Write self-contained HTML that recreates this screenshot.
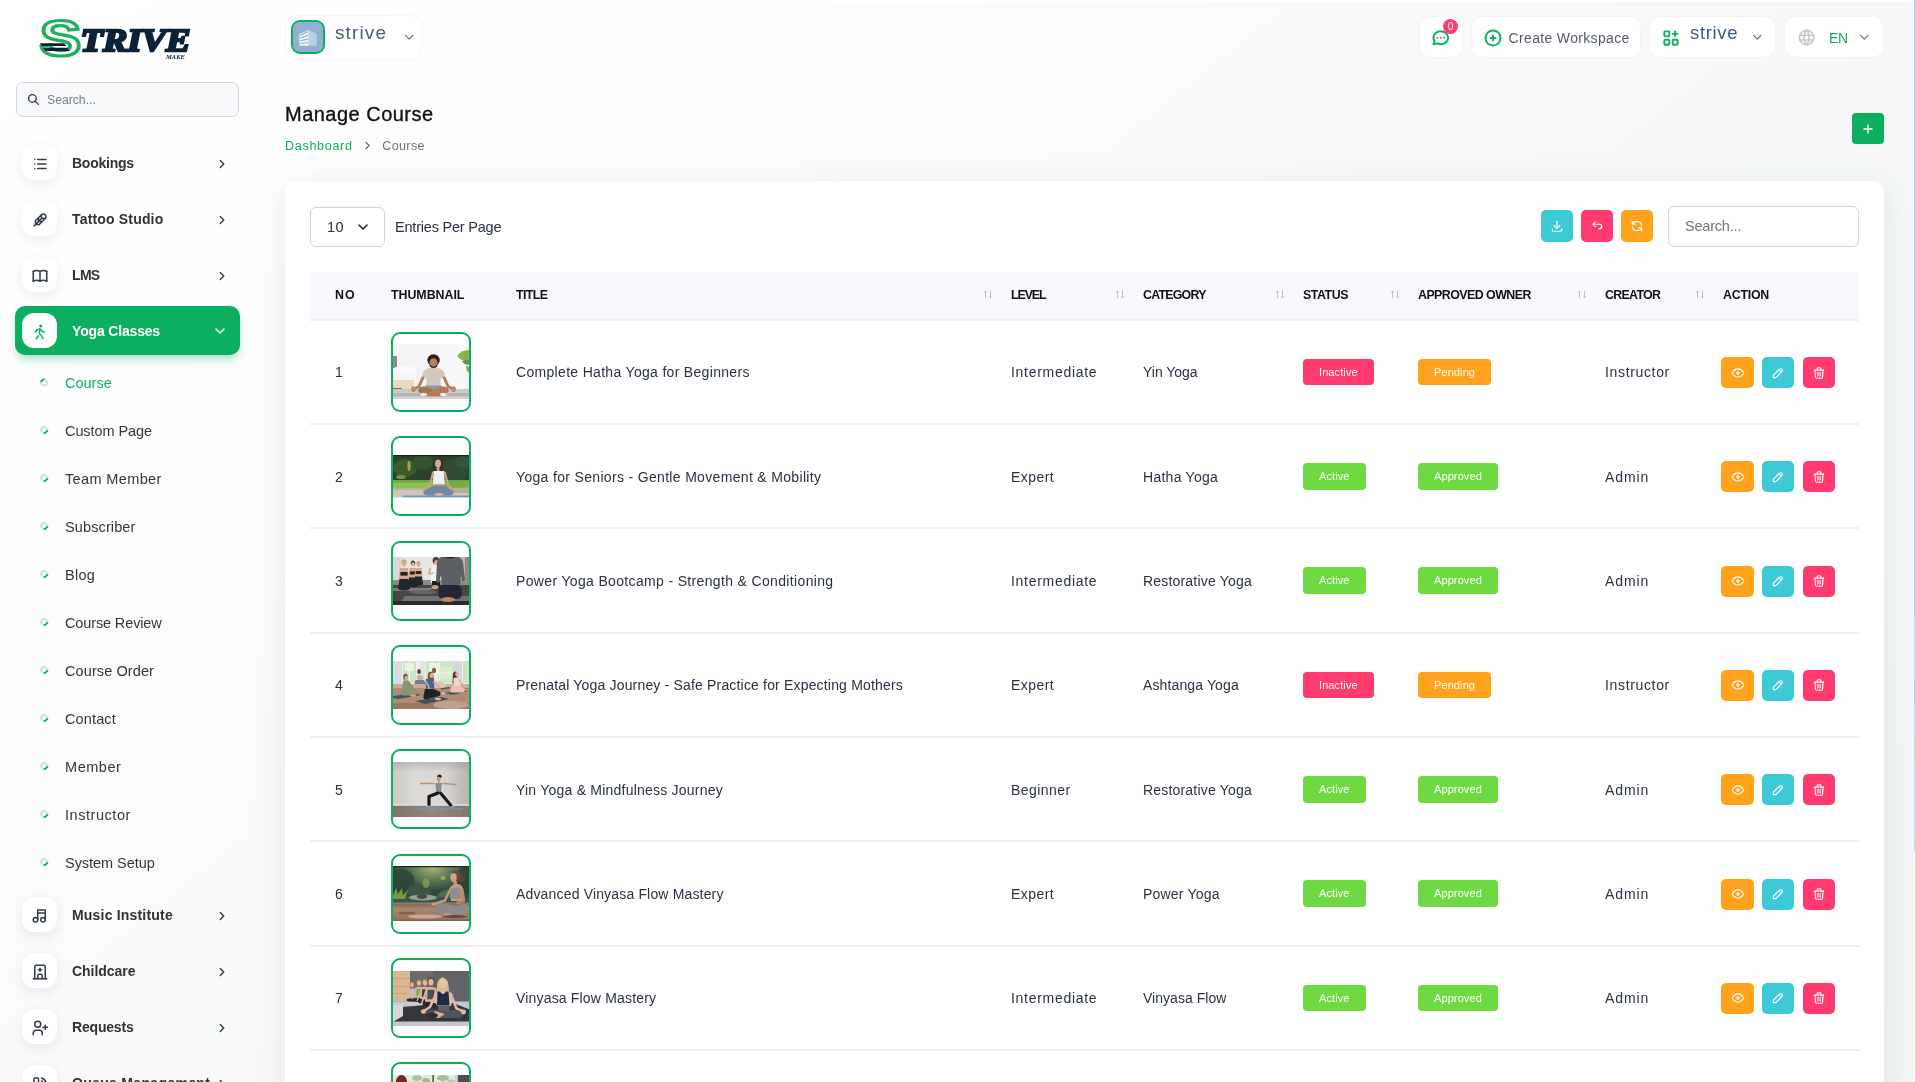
<!DOCTYPE html><html lang="en"><head><meta charset="utf-8"><title>Manage Course</title><style>*{box-sizing:border-box;margin:0;padding:0}
html,body{width:1915px;height:1082px;overflow:hidden}
body{font-family:"Liberation Sans",sans-serif;font-size:14px;color:#293240;background:#fff linear-gradient(141.55deg,rgba(240,244,243,0) 3.46%,#f0f4f3 99.86%);position:relative}
svg.ti{display:block;flex:none}
ul{list-style:none}
.bg-info{background:#3ec9d6}.bg-danger{background:#ff3a6e}.bg-warning{background:#ffa21d}.bg-success{background:#6fd943}
/* sidebar */
.sidebar{position:absolute;left:0;top:0;width:280px;height:1082px}
.logo{position:absolute;left:40px;top:18px;width:160px;height:50px}
.sb-search{position:absolute;left:16px;top:82px;width:223px;height:35px;border:1px solid #cfd5dd;border-radius:7px;background:#f8f9fa;display:flex;align-items:center;padding-left:10px;color:#7b838c;font-size:12.2px}
.sb-search .sbs{margin-left:7px;letter-spacing:0}
.nav-item{position:absolute;left:15px;width:225px;height:48.5px;border-radius:10px;display:flex;align-items:center}
.nav-ic svg{margin-top:3px}
.nav-ic{position:absolute;left:7px;top:6.5px;width:35px;height:35px;border-radius:12px;background:#fff;box-shadow:0 4px 12px rgba(40,60,80,.09);display:flex;align-items:center;justify-content:center;color:#333b47}
.nav-tx{position:absolute;left:57px;top:0;line-height:51px;font-size:14px;font-weight:700;color:#303236;letter-spacing:.1px;white-space:nowrap}
.nav-ar{position:absolute;left:200px;top:19px;color:#2f3640}
.nav-item.active{background:#0CAF60;box-shadow:0 6px 10px -2px rgba(12,175,96,.35)}
.nav-item.active .nav-ic{color:#0CAF60;box-shadow:none}
.nav-item.active .nav-tx,.nav-item.active .nav-ar{color:#fff}
.nav-item.active .nav-ar{left:197px;top:16.6px}
.sub-item{position:absolute;left:15px;width:225px;height:47px}
.sub-item .dot{position:absolute;left:24.8px;top:19px;width:8.4px;height:8.4px;border-radius:50%;border:2px solid #d5dae5;border-right-color:#0CAF60;transform:rotate(50deg)}
.sub-item.active .dot{transform:rotate(-130deg);top:18.6px}
.sub-tx{position:absolute;left:50px;top:0;line-height:48.4px;font-size:14.5px;color:#33373d;letter-spacing:0;white-space:nowrap}
.sub-item.active .sub-tx{color:#0CAF60}
/* header */
.hbox{position:absolute;background:#fff;border-radius:10px;display:flex;align-items:center;box-shadow:0 0 0 1px rgba(236,239,242,.45)}
.ws-left{left:286px;top:15.5px;width:134.6px;height:43.5px}
.avatar{position:absolute;left:5.1px;top:4.5px;width:33.7px;height:33.7px;border:2px solid #0CAF60;border-radius:9px;overflow:hidden;background:#8fb2d3}
.avatar svg{display:block}
.ws-left .ws-name{position:absolute;left:49px;top:4px;font-size:19px;color:#4a5f80;letter-spacing:1px;line-height:26px}
.ws-left .chev{position:absolute;left:115.5px;top:14.5px}
.msg{left:1420px;top:17px;width:42px;height:40px}
.msg>svg{position:absolute;left:11.3px;top:11px}
.msg .cnt{position:absolute;left:23px;top:2.4px;width:15px;height:15px;border-radius:50%;background:#ff3a6e;color:#fff;font-size:10px;line-height:15px;text-align:center}
.cw{left:1472px;top:17px;width:168px;height:40px;color:#525b69;font-size:14px}
.cw>svg{position:absolute;left:11.1px;top:11px}
.cw .cwt{position:absolute;left:36.6px;top:0;line-height:42.5px;letter-spacing:.28px;white-space:nowrap}
.ws{left:1650px;top:17px;width:125px;height:40px}
.ws>svg.ti{position:absolute;left:11.2px;top:11px}
.ws .ws-name{position:absolute;left:40px;top:3.2px;font-size:18.5px;color:#3f5a86;letter-spacing:.55px;line-height:26px}
.ws .chev{position:absolute;left:99.95px;top:13.15px}
.lang{left:1785px;top:17px;width:98px;height:40px}
.lang>svg.ti{position:absolute;left:11.5px;top:11.2px}
.lang .en{position:absolute;left:44px;top:0;line-height:43px;font-size:14px;color:#0CAF60;letter-spacing:-.9px}
.lang .chev{position:absolute;left:72.45px;top:12.95px}
.ptitle{position:absolute;left:285px;top:99px;font-size:20px;line-height:30px;font-weight:400;color:#111;letter-spacing:.05px;-webkit-text-stroke:.35px #111;white-space:nowrap}
.crumb{position:absolute;left:285px;top:135.5px;height:20px;display:flex;align-items:center;font-size:12.6px;white-space:nowrap}
.crumb .g{color:#0CAF60;letter-spacing:.2px}
.crumb .sep{margin:0 8px 0 8.5px}
.crumb .c{color:#6c757d;letter-spacing:.2px}
.addbtn{position:absolute;left:1852px;top:113px;width:32px;height:31px;border-radius:4px;background:#0CAF60;display:flex;align-items:center;justify-content:center}
/* card */
.card{position:absolute;left:285px;top:181px;width:1599px;height:920px;background:#fff;border-radius:10px;box-shadow:0 6px 30px rgba(182,186,203,.3)}
.sel{position:absolute;left:25px;top:26px;width:75px;height:40px;border:1px solid #ced4da;border-radius:6px;display:flex;align-items:center;padding-left:16px;font-size:14.5px;color:#293240}
.sel svg{position:absolute;left:44px;top:11px}
.epp{position:absolute;left:110px;top:26px;line-height:40px;font-size:14.5px;color:#293240;letter-spacing:.25px;white-space:nowrap}
.tbtn{position:absolute;top:29px;width:32px;height:32px;border-radius:5px;display:flex;align-items:center;justify-content:center}
.tsearch{position:absolute;left:1383px;top:25px;width:191px;height:41px;border:1px solid #ced4da;border-radius:6px;line-height:39px;padding-left:16px;font-size:14.5px;color:#6c757d;letter-spacing:.3px}
.tb{position:absolute;left:25px;top:91px;width:1549px}
.thead{position:absolute;left:0;top:0;width:1549px;height:49px;background:#f8f9fd;border-bottom:2px solid #eff0f2}
.th{position:absolute;top:0;height:47px;line-height:46px;font-size:12.4px;font-weight:700;color:#111;padding-left:25px;white-space:nowrap;letter-spacing:-.22px}
.sorter{position:absolute;right:-6.5px;top:17.6px;width:10px;height:9px}
.sorter svg{display:block}
.tr{position:absolute;left:0;width:1549px;height:104.33px}
.tr .ln{position:absolute;left:0;top:103.1px;width:1549px;height:1.8px;background:#f0f0f0}
.td{position:absolute;top:0;height:104px;display:flex;align-items:center;padding-left:25px;white-space:nowrap;font-size:14px;color:#293240;letter-spacing:.28px}
.c-no{left:0;width:56px}.c-th{left:56px;width:125px}.c-ti{left:181px;width:495px}.c-le{left:676px;width:132px}.c-ca{left:808px;width:160px}
.c-st{left:968px;width:115px}.c-ap{left:1083px;width:187px}.c-cr{left:1270px;width:118px}.c-ac{left:1388px;width:161px}
.thumb{display:block;width:80px;height:80px;border:2px solid #0CAF60;border-radius:9px;overflow:hidden;background:#fff}
.thumb svg{display:block}
.badge{display:inline-block;height:26.4px;line-height:26.4px;padding:0 16px;border-radius:4px;color:#fff;font-size:11px;letter-spacing:.1px}
.abtn{width:32px;height:31px;border-radius:5px;display:inline-flex;align-items:center;justify-content:center;margin-right:9px}
.abtn:first-child{width:33px;margin-right:8px}
.td.c-ac{padding-left:23px;padding-top:1px}
.td.c-no,.td.c-ti,.td.c-le,.td.c-ca,.td.c-cr{padding-top:.9px}
.scrolltrack{position:absolute;left:1914px;top:0;width:1px;height:1082px;background:#fff}
.scrollthumb{position:absolute;left:1913.6px;top:0;width:1.4px;height:851px;background:#c9cef0}

.topstrip{position:absolute;left:0;top:0;width:1915px;height:2px;background:#fff}

.wrap{position:absolute;left:0;top:0;width:1915px;height:1082px;overflow:hidden;will-change:transform}
</style></head><body><div class="wrap">
<nav class="sidebar">
<div class="logo"><svg width="160" height="50" viewBox="0 0 160 50" overflow="visible"><text x="-0.3" y="37.6" font-family="Liberation Sans, sans-serif" font-weight="700" font-size="50.5" fill="#fff" stroke="#1eb05f" stroke-width="3.2" textLength="41.5" lengthAdjust="spacingAndGlyphs">S</text><path d="M-0.4 25.3h24.5l2.6 2.7h-25z" fill="#0b2236"/><path d="M3 29.7h24.2l2.6 3.2h-24.2z" fill="#0b2236"/><text x="40.5" y="33.4" font-family="Liberation Serif, serif" font-weight="700" font-style="italic" font-size="32.5" fill="#0b2236" stroke="#0b2236" stroke-width="2.3" stroke-linejoin="miter" textLength="110" lengthAdjust="spacingAndGlyphs">TRIVE</text><text x="126" y="40.8" font-family="Liberation Serif, serif" font-weight="700" font-style="italic" font-size="6" fill="#0b2236" textLength="19" lengthAdjust="spacingAndGlyphs">MAKE</text></svg></div>
<div class="sb-search"><svg class="ti" width="13" height="13" viewBox="0 0 24 24" fill="none" stroke="#3b3f45" stroke-width="2.6" stroke-linecap="round" stroke-linejoin="round" ><path d="M10 10m-7 0a7 7 0 1 0 14 0a7 7 0 1 0 -14 0"/><path d="M21 21l-6 -6"/></svg><span class="sbs"><span style="letter-spacing:0.002px;margin-left:0.00px">Search...</span></span></div>
<ul class="nav">
<li class="nav-item" style="top:138px"><span class="nav-ic"><svg class="ti" width="18" height="18" viewBox="0 0 24 24" fill="none" stroke="currentColor" stroke-width="2" stroke-linecap="round" stroke-linejoin="round" ><path d="M9 6l11 0"/><path d="M9 12l11 0"/><path d="M9 18l11 0"/><path d="M5 6l0 .01"/><path d="M5 12l0 .01"/><path d="M5 18l0 .01"/></svg></span><span class="nav-tx"><span style="letter-spacing:-0.240px;margin-left:0.00px">Bookings</span></span><span class="nav-ar"><svg class="ti" width="14" height="14" viewBox="0 0 24 24" fill="none" stroke="currentColor" stroke-width="2.4" stroke-linecap="round" stroke-linejoin="round" ><path d="M9 6l6 6l-6 6"/></svg></span></li>
<li class="nav-item" style="top:194px"><span class="nav-ic"><svg class="ti" width="18" height="18" viewBox="0 0 24 24" fill="none" stroke="currentColor" stroke-width="2" stroke-linecap="round" stroke-linejoin="round" ><path d="M4 20l10 -10m0 -5v5h5m-9 -1v5h5m-9 -1v5h5m-5 -5l4 -4l4 -4"/><path d="M19 10c.638 -.636 1 -1.515 1 -2.486a3.515 3.515 0 0 0 -3.517 -3.514c-.97 0 -1.847 .367 -2.483 1m-3 13l4 -4l4 -4"/></svg></span><span class="nav-tx"><span style="letter-spacing:0.172px;margin-left:0.00px">Tattoo Studio</span></span><span class="nav-ar"><svg class="ti" width="14" height="14" viewBox="0 0 24 24" fill="none" stroke="currentColor" stroke-width="2.4" stroke-linecap="round" stroke-linejoin="round" ><path d="M9 6l6 6l-6 6"/></svg></span></li>
<li class="nav-item" style="top:250px"><span class="nav-ic"><svg class="ti" width="18" height="18" viewBox="0 0 24 24" fill="none" stroke="currentColor" stroke-width="2" stroke-linecap="round" stroke-linejoin="round" ><path d="M3 19a9 9 0 0 1 9 0a9 9 0 0 1 9 0"/><path d="M3 6a9 9 0 0 1 9 0a9 9 0 0 1 9 0"/><path d="M3 6l0 13"/><path d="M12 6l0 13"/><path d="M21 6l0 13"/></svg></span><span class="nav-tx"><span style="letter-spacing:-0.673px;margin-left:0.00px">LMS</span></span><span class="nav-ar"><svg class="ti" width="14" height="14" viewBox="0 0 24 24" fill="none" stroke="currentColor" stroke-width="2.4" stroke-linecap="round" stroke-linejoin="round" ><path d="M9 6l6 6l-6 6"/></svg></span></li>
<li class="nav-item active" style="top:306px"><span class="nav-ic"><svg class="ti" width="18" height="18" viewBox="0 0 24 24" fill="none" stroke="currentColor" stroke-width="2" stroke-linecap="round" stroke-linejoin="round" ><path d="M13 4m-1 0a1 1 0 1 0 2 0a1 1 0 1 0 -2 0"/><path d="M7 21l3 -4"/><path d="M16 21l-2 -4l-3 -3l1 -6"/><path d="M6 12l2 -3l4 -1l3 3l3 1"/></svg></span><span class="nav-tx"><span style="letter-spacing:-0.168px;margin-left:0.00px">Yoga Classes</span></span><span class="nav-ar"><svg class="ti" width="16" height="16" viewBox="0 0 24 24" fill="none" stroke="currentColor" stroke-width="2.2" stroke-linecap="round" stroke-linejoin="round" ><path d="M6 9l6 6l6 -6"/></svg></span></li>
<li class="sub-item active" style="top:359px"><span class="dot"></span><span class="sub-tx"><span style="letter-spacing:0.000px;margin-left:0.00px">Course</span></span></li>
<li class="sub-item" style="top:407px"><span class="dot"></span><span class="sub-tx"><span style="letter-spacing:-0.084px;margin-left:0.00px">Custom Page</span></span></li>
<li class="sub-item" style="top:455px"><span class="dot"></span><span class="sub-tx"><span style="letter-spacing:0.370px;margin-left:0.00px">Team Member</span></span></li>
<li class="sub-item" style="top:503px"><span class="dot"></span><span class="sub-tx"><span style="letter-spacing:0.118px;margin-left:0.00px">Subscriber</span></span></li>
<li class="sub-item" style="top:551px"><span class="dot"></span><span class="sub-tx"><span style="letter-spacing:0.249px;margin-left:0.00px">Blog</span></span></li>
<li class="sub-item" style="top:599px"><span class="dot"></span><span class="sub-tx"><span style="letter-spacing:-0.131px;margin-left:0.00px">Course Review</span></span></li>
<li class="sub-item" style="top:647px"><span class="dot"></span><span class="sub-tx"><span style="letter-spacing:0.095px;margin-left:0.00px">Course Order</span></span></li>
<li class="sub-item" style="top:695px"><span class="dot"></span><span class="sub-tx"><span style="letter-spacing:0.125px;margin-left:0.00px">Contact</span></span></li>
<li class="sub-item" style="top:743px"><span class="dot"></span><span class="sub-tx"><span style="letter-spacing:0.551px;margin-left:0.00px">Member</span></span></li>
<li class="sub-item" style="top:791px"><span class="dot"></span><span class="sub-tx"><span style="letter-spacing:0.551px;margin-left:0.00px">Instructor</span></span></li>
<li class="sub-item" style="top:839px"><span class="dot"></span><span class="sub-tx"><span style="letter-spacing:-0.042px;margin-left:0.00px">System Setup</span></span></li>
<li class="nav-item" style="top:890px"><span class="nav-ic"><svg class="ti" width="18" height="18" viewBox="0 0 24 24" fill="none" stroke="currentColor" stroke-width="2" stroke-linecap="round" stroke-linejoin="round" ><path d="M6 17m-3 0a3 3 0 1 0 6 0a3 3 0 1 0 -6 0"/><path d="M16 17m-3 0a3 3 0 1 0 6 0a3 3 0 1 0 -6 0"/><path d="M9 17l0 -13l10 0l0 13"/><path d="M9 8l10 0"/></svg></span><span class="nav-tx"><span style="letter-spacing:0.191px;margin-left:0.00px">Music Institute</span></span><span class="nav-ar"><svg class="ti" width="14" height="14" viewBox="0 0 24 24" fill="none" stroke="currentColor" stroke-width="2.4" stroke-linecap="round" stroke-linejoin="round" ><path d="M9 6l6 6l-6 6"/></svg></span></li>
<li class="nav-item" style="top:946px"><span class="nav-ic"><svg class="ti" width="18" height="18" viewBox="0 0 24 24" fill="none" stroke="currentColor" stroke-width="2" stroke-linecap="round" stroke-linejoin="round" ><path d="M3 21l18 0"/><path d="M5 21v-16a2 2 0 0 1 2 -2h10a2 2 0 0 1 2 2v16"/><path d="M9 21v-4a2 2 0 0 1 2 -2h2a2 2 0 0 1 2 2v4"/><path d="M10 9l4 0"/><path d="M12 7l0 4"/></svg></span><span class="nav-tx"><span style="letter-spacing:-0.037px;margin-left:0.00px">Childcare</span></span><span class="nav-ar"><svg class="ti" width="14" height="14" viewBox="0 0 24 24" fill="none" stroke="currentColor" stroke-width="2.4" stroke-linecap="round" stroke-linejoin="round" ><path d="M9 6l6 6l-6 6"/></svg></span></li>
<li class="nav-item" style="top:1002px"><span class="nav-ic"><svg class="ti" width="18" height="18" viewBox="0 0 24 24" fill="none" stroke="currentColor" stroke-width="2" stroke-linecap="round" stroke-linejoin="round" ><path d="M9 7m-4 0a4 4 0 1 0 8 0a4 4 0 1 0 -8 0"/><path d="M3 21v-2a4 4 0 0 1 4 -4h4a4 4 0 0 1 4 4v2"/><path d="M16 11h6m-3 -3v6"/></svg></span><span class="nav-tx"><span style="letter-spacing:-0.186px;margin-left:0.00px">Requests</span></span><span class="nav-ar"><svg class="ti" width="14" height="14" viewBox="0 0 24 24" fill="none" stroke="currentColor" stroke-width="2.4" stroke-linecap="round" stroke-linejoin="round" ><path d="M9 6l6 6l-6 6"/></svg></span></li>
<li class="nav-item" style="top:1058px"><span class="nav-ic"><svg class="ti" width="18" height="18" viewBox="0 0 24 24" fill="none" stroke="currentColor" stroke-width="2" stroke-linecap="round" stroke-linejoin="round" ><path d="M5 4h4a1 1 0 0 1 1 1v6a1 1 0 0 1 -1 1h-4a1 1 0 0 1 -1 -1v-6a1 1 0 0 1 1 -1"/><path d="M14 4a8 8 0 0 1 6 7"/><path d="M14 8a4 4 0 0 1 2.5 3"/><path d="M4 16h6v4h-6z"/><path d="M14 16h6"/></svg></span><span class="nav-tx"><span style="letter-spacing:0.319px;margin-left:0.00px">Queue Management</span></span><span class="nav-ar"><svg class="ti" width="14" height="14" viewBox="0 0 24 24" fill="none" stroke="currentColor" stroke-width="2.4" stroke-linecap="round" stroke-linejoin="round" ><path d="M9 6l6 6l-6 6"/></svg></span></li>
</ul></nav>
<header class="topbar">
<div class="hbox ws-left"><span class="avatar"><svg width="29.7" height="29.7" viewBox="0 0 30 30"><rect width="30" height="30" fill="#8fb1cf"/><path d="M6.5 24V12.5l9.5-4.7V24z" fill="#eef4fa"/><path d="M16 7.8l8 4.2V24h-8z" fill="#b9cfe4"/><path d="M7.5 13.4l8-3.9M7.5 16.2l8-2.9M7.5 19l8-1.9M7.5 21.7l8-.9" stroke="#8fb2d3" stroke-width="1.1"/></svg></span><span class="ws-name"><span style="letter-spacing:1.118px;margin-left:0.00px">strive</span></span><span class="chev"><svg class="ti" width="14.5" height="14.5" viewBox="0 0 24 24" fill="none" stroke="#5f6980" stroke-width="1.9" stroke-linecap="round" stroke-linejoin="round" ><path d="M6 9l6 6l6 -6"/></svg></span></div>
<div class="hbox msg"><svg class="ti" width="19.5" height="19.5" viewBox="0 0 24 24" fill="none" stroke="#0CAF60" stroke-width="2.3" stroke-linecap="round" stroke-linejoin="round" ><path d="M3 20l1.3 -3.9a9 8 0 1 1 3.4 2.9l-4.7 1"/><path d="M12 12l0 .01"/><path d="M8 12l0 .01"/><path d="M16 12l0 .01"/></svg><span class="cnt">0</span></div>
<div class="hbox cw"><svg class="ti" width="20" height="20" viewBox="0 0 24 24" fill="none" stroke="#0CAF60" stroke-width="2.3" stroke-linecap="round" stroke-linejoin="round" ><path d="M12 12m-9 0a9 9 0 1 0 18 0a9 9 0 1 0 -18 0"/><path d="M9 12l6 0"/><path d="M12 9l0 6"/></svg><span class="cwt"><span style="letter-spacing:0.337px;margin-left:0.00px">Create Workspace</span></span></div>
<div class="hbox ws"><svg class="ti" width="20" height="20" viewBox="0 0 24 24" fill="none" stroke="#0CAF60" stroke-width="2.3" stroke-linecap="round" stroke-linejoin="round" ><path d="M4 4m0 1a1 1 0 0 1 1 -1h4a1 1 0 0 1 1 1v4a1 1 0 0 1 -1 1h-4a1 1 0 0 1 -1 -1z"/><path d="M4 14m0 1a1 1 0 0 1 1 -1h4a1 1 0 0 1 1 1v4a1 1 0 0 1 -1 1h-4a1 1 0 0 1 -1 -1z"/><path d="M14 14m0 1a1 1 0 0 1 1 -1h4a1 1 0 0 1 1 1v4a1 1 0 0 1 -1 1h-4a1 1 0 0 1 -1 -1z"/><path d="M14 7l6 0"/><path d="M17 4l0 6"/></svg><span class="ws-name"><span style="letter-spacing:0.654px;margin-left:0.00px">strive</span></span><span class="chev"><svg class="ti" width="14.5" height="14.5" viewBox="0 0 24 24" fill="none" stroke="#5f6980" stroke-width="1.9" stroke-linecap="round" stroke-linejoin="round" ><path d="M6 9l6 6l6 -6"/></svg></span></div>
<div class="hbox lang"><svg class="ti" width="19.2" height="19.2" viewBox="0 0 24 24" fill="none" stroke="#c8c8c8" stroke-width="2" stroke-linecap="round" stroke-linejoin="round" ><path d="M12 12m-9 0a9 9 0 1 0 18 0a9 9 0 1 0 -18 0"/><path d="M3.6 9l16.8 0"/><path d="M3.6 15l16.8 0"/><path d="M11.5 3a17 17 0 0 0 0 18"/><path d="M12.5 3a17 17 0 0 1 0 18"/></svg><span class="en"><span style="letter-spacing:-0.377px;margin-left:0.00px">EN</span></span><span class="chev"><svg class="ti" width="14.5" height="14.5" viewBox="0 0 24 24" fill="none" stroke="#5f6980" stroke-width="1.9" stroke-linecap="round" stroke-linejoin="round" ><path d="M6 9l6 6l6 -6"/></svg></span></div>
</header>
<h4 class="ptitle"><span style="letter-spacing:0.482px;margin-left:0.00px">Manage Course</span></h4>
<div class="crumb"><span class="g"><span style="letter-spacing:0.673px;margin-left:0.00px">Dashboard</span></span><span class="sep"><svg class="ti" width="13" height="13" viewBox="0 0 24 24" fill="none" stroke="#5d6670" stroke-width="2" stroke-linecap="round" stroke-linejoin="round" ><path d="M9 6l6 6l-6 6"/></svg></span><span class="c"><span style="letter-spacing:0.360px;margin-left:0.00px">Course</span></span></div>
<div class="addbtn"><svg class="ti" width="14" height="14" viewBox="0 0 24 24" fill="none" stroke="#fff" stroke-width="2.3" stroke-linecap="round" stroke-linejoin="round" ><path d="M12 5l0 14"/><path d="M5 12l14 0"/></svg></div>
<section class="card">
<div class="sel"><span style="letter-spacing:0.366px;margin-left:0.00px">10</span><svg class="ti" width="16" height="16" viewBox="0 0 24 24" fill="none" stroke="#222" stroke-width="2.4" stroke-linecap="round" stroke-linejoin="round" ><path d="M6 9l6 6l6 -6"/></svg></div><div class="epp"><span style="letter-spacing:-0.208px;margin-left:0.00px">Entries Per Page</span></div>
<div class="tbtn bg-info" style="left:1256px"><svg class="ti" width="14" height="14" viewBox="0 0 24 24" fill="none" stroke="#fff" stroke-width="2" stroke-linecap="round" stroke-linejoin="round" ><path d="M4 17v2a2 2 0 0 0 2 2h12a2 2 0 0 0 2 -2v-2"/><path d="M7 11l5 5l5 -5"/><path d="M12 4l0 12"/></svg></div><div class="tbtn bg-danger" style="left:1296px"><svg class="ti" width="14" height="14" viewBox="0 0 24 24" fill="none" stroke="#fff" stroke-width="2" stroke-linecap="round" stroke-linejoin="round" ><path d="M9 13l-4 -4l4 -4m-4 4h11a4 4 0 0 1 0 8h-1"/></svg></div><div class="tbtn bg-warning" style="left:1336px"><svg class="ti" width="14" height="14" viewBox="0 0 24 24" fill="none" stroke="#fff" stroke-width="2" stroke-linecap="round" stroke-linejoin="round" ><path d="M20 11a8.1 8.1 0 0 0 -15.5 -2m-.5 -5v5h5"/><path d="M4 13a8.1 8.1 0 0 0 15.5 2m.5 5v-5h-5"/></svg></div>
<div class="tsearch"><span style="letter-spacing:-0.203px;margin-left:0.00px">Search...</span></div>
<div class="tb"><div class="thead">
<div class="th c-no"><span class="ht"><span style="letter-spacing:1.003px;margin-left:0.00px">NO</span></span></div>
<div class="th c-th"><span class="ht"><span style="letter-spacing:-0.035px;margin-left:0.00px">THUMBNAIL</span></span></div>
<div class="th c-ti"><span class="ht"><span style="letter-spacing:-0.605px;margin-left:0.00px">TITLE</span></span><span class="sorter"><svg width="10" height="9" viewBox="0 0 10 9" fill="none" stroke="#b7bbc2" stroke-width=".9"><path d="M2.5 8.3V1M1.1 2.5L2.5 1L3.9 2.5M7.5 .7V8M6.1 6.5L7.5 8L8.9 6.5"/></svg></span></div>
<div class="th c-le"><span class="ht"><span style="letter-spacing:-1.101px;margin-left:0.00px">LEVEL</span></span><span class="sorter"><svg width="10" height="9" viewBox="0 0 10 9" fill="none" stroke="#b7bbc2" stroke-width=".9"><path d="M2.5 8.3V1M1.1 2.5L2.5 1L3.9 2.5M7.5 .7V8M6.1 6.5L7.5 8L8.9 6.5"/></svg></span></div>
<div class="th c-ca"><span class="ht"><span style="letter-spacing:-0.771px;margin-left:0.00px">CATEGORY</span></span><span class="sorter"><svg width="10" height="9" viewBox="0 0 10 9" fill="none" stroke="#b7bbc2" stroke-width=".9"><path d="M2.5 8.3V1M1.1 2.5L2.5 1L3.9 2.5M7.5 .7V8M6.1 6.5L7.5 8L8.9 6.5"/></svg></span></div>
<div class="th c-st"><span class="ht"><span style="letter-spacing:-0.444px;margin-left:0.00px">STATUS</span></span><span class="sorter"><svg width="10" height="9" viewBox="0 0 10 9" fill="none" stroke="#b7bbc2" stroke-width=".9"><path d="M2.5 8.3V1M1.1 2.5L2.5 1L3.9 2.5M7.5 .7V8M6.1 6.5L7.5 8L8.9 6.5"/></svg></span></div>
<div class="th c-ap"><span class="ht"><span style="letter-spacing:-0.547px;margin-left:0.00px">APPROVED OWNER</span></span><span class="sorter"><svg width="10" height="9" viewBox="0 0 10 9" fill="none" stroke="#b7bbc2" stroke-width=".9"><path d="M2.5 8.3V1M1.1 2.5L2.5 1L3.9 2.5M7.5 .7V8M6.1 6.5L7.5 8L8.9 6.5"/></svg></span></div>
<div class="th c-cr"><span class="ht"><span style="letter-spacing:-0.686px;margin-left:0.00px">CREATOR</span></span><span class="sorter"><svg width="10" height="9" viewBox="0 0 10 9" fill="none" stroke="#b7bbc2" stroke-width=".9"><path d="M2.5 8.3V1M1.1 2.5L2.5 1L3.9 2.5M7.5 .7V8M6.1 6.5L7.5 8L8.9 6.5"/></svg></span></div>
<div class="th c-ac"><span class="ht"><span style="letter-spacing:-0.244px;margin-left:0.00px">ACTION</span></span></div>
</div>
<div class="tr" style="top:48.00px"><i class="ln"></i><div class="td c-no">1</div><div class="td c-th"><span class="thumb"><svg width="76" height="76" viewBox="0 0 76 76"><defs><clipPath id="c1"><rect x="0" y="10" width="76" height="55"/></clipPath><filter id="f1" x="-5%" y="-5%" width="110%" height="110%"><feGaussianBlur stdDeviation="0.55"/></filter></defs><g clip-path="url(#c1)"><g filter="url(#f1)"><rect x="-2" y="8" width="80" height="60" fill="#f3f4f5" /><rect x="46" y="10" width="32" height="46" fill="#f8f8f9" /><rect x="0" y="22" width="4" height="13" fill="#8a8990" /><rect x="0" y="38" width="23" height="9" fill="#f4f4f4" /><rect x="0" y="46" width="21" height="9" fill="#e9d9bf" /><rect x="0" y="54" width="9" height="3" fill="#8a6f5f" /><rect x="24" y="34" width="1.6" height="18" fill="#ededed" /><rect x="-2" y="55" width="80" height="11" fill="#c9c9c8" /><rect x="-2" y="59" width="80" height="4" fill="#b4b4b4" /><rect x="-2" y="62.5" width="80" height="3" fill="#d2d2d2" /><path d="M64 22 q4 -6 12 -6 v10 q-7 2 -12 -4z" fill="#86b544" /><path d="M69 27 q4 -2 7 -1 v5 q-5 0 -7 -4z" fill="#6d8f5a" /><path d="M73 32 q2 0 3 1 v6 q-3 -2 -3 -7z" fill="#7cab3f" /><rect x="0" y="34" width="23" height="9" fill="#f7f7f7" /><ellipse cx="11" cy="35" rx="11" ry="3" fill="#fbfbfb" /><g transform="translate(-3.2,-2.6) scale(1.08)"><ellipse cx="40.5" cy="26.5" rx="5.8" ry="5.4" fill="#2b2019" /><ellipse cx="40.5" cy="29.2" rx="3.7" ry="4.4" fill="#b78160" /><path d="M37 30.5 q3.5 4.5 7 0 v2 q-3.5 3 -7 0z" fill="#3a2a22" /><path d="M30 40 q1 -5 7 -6 h7 q6 1 7 6 l-1 4 -3 -1 v9 h-13 v-9 l-3 1z" fill="#d2c8bb" /><path d="M30.5 43 L27 51 L23 53" fill="none" stroke="#b27b58" stroke-width="2.6" stroke-linecap="round" stroke-linejoin="round" /><path d="M50.5 43 L54 51 L58 53" fill="none" stroke="#b27b58" stroke-width="2.6" stroke-linecap="round" stroke-linejoin="round" /><ellipse cx="22" cy="53.5" rx="2.3" ry="2.6" fill="#c08a68" /><ellipse cx="59" cy="53.5" rx="2.3" ry="2.6" fill="#c08a68" /><path d="M33 50 h15 l2 5 h-19z" fill="#8f989e" /><path d="M26.5 53 q3 -3.5 9 -1 l11 5 q4 2 3 3 h-8 q-10 -1 -15 -4z" fill="#a8714e" /><path d="M54.5 53 q-3 -3.5 -9 -1 l-11 5 q-4 2 -3 3 h8 q10 -1 15 -4z" fill="#b47c58" /><ellipse cx="31.5" cy="58.5" rx="3" ry="1.6" fill="#ececec" /><ellipse cx="49.5" cy="58.5" rx="3" ry="1.6" fill="#ececec" /></g></g></g></svg></span></div><div class="td c-ti"><span style="letter-spacing:0.314px;margin-left:0.00px">Complete Hatha Yoga for Beginners</span></div><div class="td c-le"><span style="letter-spacing:0.705px;margin-left:0.00px">Intermediate</span></div><div class="td c-ca"><span style="letter-spacing:-0.021px;margin-left:0.00px">Yin Yoga</span></div><div class="td c-st"><span class="badge bg-danger">Inactive</span></div><div class="td c-ap"><span class="badge bg-warning">Pending</span></div><div class="td c-cr"><span style="letter-spacing:0.656px;margin-left:0.00px">Instructor</span></div><div class="td c-ac"><span class="abtn bg-warning"><svg class="ti" width="14" height="14" viewBox="0 0 24 24" fill="none" stroke="#fff" stroke-width="2" stroke-linecap="round" stroke-linejoin="round" ><path d="M12 12m-2 0a2 2 0 1 0 4 0a2 2 0 1 0 -4 0"/><path d="M22 12c-2.667 4.667 -6 7 -10 7s-7.333 -2.333 -10 -7c2.667 -4.667 6 -7 10 -7s7.333 2.333 10 7"/></svg></span><span class="abtn bg-info"><svg class="ti" width="14" height="14" viewBox="0 0 24 24" fill="none" stroke="#fff" stroke-width="2" stroke-linecap="round" stroke-linejoin="round" ><path d="M4 20h4l10.5 -10.5a1.5 1.5 0 0 0 -4 -4l-10.5 10.5v4"/><path d="M13.5 6.5l4 4"/></svg></span><span class="abtn bg-danger"><svg class="ti" width="14" height="14" viewBox="0 0 24 24" fill="none" stroke="#fff" stroke-width="2" stroke-linecap="round" stroke-linejoin="round" ><path d="M4 7l16 0"/><path d="M10 11l0 6"/><path d="M14 11l0 6"/><path d="M5 7l1 12a2 2 0 0 0 2 2h8a2 2 0 0 0 2 -2l1 -12"/><path d="M9 7v-3a1 1 0 0 1 1 -1h4a1 1 0 0 1 1 1v3"/></svg></span></div></div>
<div class="tr" style="top:152.33px"><i class="ln"></i><div class="td c-no">2</div><div class="td c-th"><span class="thumb"><svg width="76" height="76" viewBox="0 0 76 76"><defs><clipPath id="c2"><rect x="0" y="17" width="76" height="42.5"/></clipPath><filter id="f2" x="-5%" y="-5%" width="110%" height="110%"><feGaussianBlur stdDeviation="0.55"/></filter></defs><g clip-path="url(#c2)"><g filter="url(#f2)"><rect x="-2" y="15" width="80" height="30" fill="#29432a" /><ellipse cx="12" cy="30" rx="12" ry="9" fill="#3a5a33" /><ellipse cx="30" cy="24" rx="10" ry="8" fill="#34522f" /><ellipse cx="62" cy="32" rx="14" ry="12" fill="#2d4a35" /><ellipse cx="16" cy="28" rx="1.6" ry="5" fill="#a6a83a" /><ellipse cx="8" cy="39" rx="5" ry="2" fill="#6f9640" /><ellipse cx="70" cy="24" rx="8" ry="6" fill="#39553a" /><rect x="-2" y="17" width="80" height="1.2" fill="#15241a" /><rect x="-2" y="42" width="80" height="9" fill="#8cc24e" /><rect x="-2" y="42" width="80" height="2.5" fill="#6fa444" /><ellipse cx="62" cy="47" rx="16" ry="3" fill="#79ab47" /><rect x="-2" y="50" width="80" height="10" fill="#cfc7b9" /><rect x="-2" y="50" width="80" height="2" fill="#b9b29f" /><rect x="56" y="51" width="22" height="4" fill="#b9ab8e" /><rect x="10" y="57.5" width="68" height="2" fill="#6f9bb8" /><path d="M41 22 q4 -4 8 0 q1.5 7 0 12 h-2 v-8 h-4 v8 l-3 4z" fill="#3a2a26" /><ellipse cx="45" cy="25.5" rx="3" ry="4" fill="#d9a98e" /><rect x="43.8" y="29" width="2.6" height="4" fill="#d3a084" /><path d="M40.5 33 h10.5 l.8 13.5 h-12z" fill="#eef1f3" /><path d="M40 34.5 L37 47 L32 51.5" fill="none" stroke="#d2a085" stroke-width="2.2" stroke-linecap="round" stroke-linejoin="round" /><path d="M51.8 34.5 L55 47 L59.5 51.5" fill="none" stroke="#d2a085" stroke-width="2.2" stroke-linecap="round" stroke-linejoin="round" /><rect x="40.3" y="46.5" width="10.8" height="1.6" fill="#c98f6e" /><path d="M40 48 h11.5 l9 5 q1 4 -4 4.5 h-22 q-5 -.5 -4 -4.5z" fill="#6e87a7" /><ellipse cx="46" cy="56.3" rx="4.5" ry="1.4" fill="#dcb39b" /></g></g></svg></span></div><div class="td c-ti"><span style="letter-spacing:0.329px;margin-left:0.00px">Yoga for Seniors - Gentle Movement &amp; Mobility</span></div><div class="td c-le"><span style="letter-spacing:0.446px;margin-left:0.00px">Expert</span></div><div class="td c-ca"><span style="letter-spacing:0.268px;margin-left:0.00px">Hatha Yoga</span></div><div class="td c-st"><span class="badge bg-success">Active</span></div><div class="td c-ap"><span class="badge bg-success">Approved</span></div><div class="td c-cr"><span style="letter-spacing:0.912px;margin-left:0.00px">Admin</span></div><div class="td c-ac"><span class="abtn bg-warning"><svg class="ti" width="14" height="14" viewBox="0 0 24 24" fill="none" stroke="#fff" stroke-width="2" stroke-linecap="round" stroke-linejoin="round" ><path d="M12 12m-2 0a2 2 0 1 0 4 0a2 2 0 1 0 -4 0"/><path d="M22 12c-2.667 4.667 -6 7 -10 7s-7.333 -2.333 -10 -7c2.667 -4.667 6 -7 10 -7s7.333 2.333 10 7"/></svg></span><span class="abtn bg-info"><svg class="ti" width="14" height="14" viewBox="0 0 24 24" fill="none" stroke="#fff" stroke-width="2" stroke-linecap="round" stroke-linejoin="round" ><path d="M4 20h4l10.5 -10.5a1.5 1.5 0 0 0 -4 -4l-10.5 10.5v4"/><path d="M13.5 6.5l4 4"/></svg></span><span class="abtn bg-danger"><svg class="ti" width="14" height="14" viewBox="0 0 24 24" fill="none" stroke="#fff" stroke-width="2" stroke-linecap="round" stroke-linejoin="round" ><path d="M4 7l16 0"/><path d="M10 11l0 6"/><path d="M14 11l0 6"/><path d="M5 7l1 12a2 2 0 0 0 2 2h8a2 2 0 0 0 2 -2l1 -12"/><path d="M9 7v-3a1 1 0 0 1 1 -1h4a1 1 0 0 1 1 1v3"/></svg></span></div></div>
<div class="tr" style="top:256.66px"><i class="ln"></i><div class="td c-no">3</div><div class="td c-th"><span class="thumb"><svg width="76" height="76" viewBox="0 0 76 76"><defs><clipPath id="c3"><rect x="0" y="14" width="76" height="48"/></clipPath><filter id="f3" x="-5%" y="-5%" width="110%" height="110%"><feGaussianBlur stdDeviation="0.55"/></filter></defs><g clip-path="url(#c3)"><g filter="url(#f3)"><rect x="-2" y="12" width="80" height="28" fill="#e6e6e6" /><rect x="0" y="14" width="8" height="24" fill="#d8d8d8" /><rect x="66" y="14" width="12" height="26" fill="#b9b5b2" /><rect x="72" y="14" width="6" height="24" fill="#8e8783" /><rect x="-2" y="37" width="80" height="27" fill="#4a4442" /><rect x="-2" y="37" width="80" height="5" fill="#8d8b8a" /><path d="M-2 45 h44 l-8 3 h-36z" fill="#7c7d80" /><path d="M12 53 h66 v5 h-70z" fill="#6f7174" /><rect x="-2" y="58" width="80" height="6" fill="#2f2a29" /><ellipse cx="30" cy="49" rx="14" ry="2" fill="#6a6361" /><ellipse cx="11" cy="19.5" rx="2.6" ry="3.2" fill="#caa57a" /><ellipse cx="11" cy="21.0" rx="2.0" ry="2.6" fill="#dcae93" /><path d="M6.8 25.0 h8.4 l1.0 12.0 h-10.4 z" fill="#d8a78b" /><rect x="7.4" y="29.0" width="7.2" height="3.6" fill="#1f2024" /><path d="M6.5 36.0 h9.0 l1.5 10.0 q-6.0 3.0 -12.0 0z" fill="#23252b" /><ellipse cx="20" cy="20.27" rx="2.236" ry="2.7520000000000002" fill="#4a3a33" /><ellipse cx="20" cy="21.560000000000002" rx="1.72" ry="2.236" fill="#dcae93" /><path d="M16.387999999999998 25.0 h7.224 l0.86 10.32 h-8.944 z" fill="#d8a78b" /><rect x="16.904" y="28.44" width="6.192" height="3.096" fill="#1f2024" /><path d="M16.13 34.46 h7.74 l1.29 8.6 q-5.16 2.58 -10.32 0z" fill="#23252b" /><ellipse cx="25.5" cy="20.709999999999997" rx="2.028" ry="2.4960000000000004" fill="#c9a06e" /><ellipse cx="25.5" cy="21.88" rx="1.56" ry="2.028" fill="#dcae93" /><path d="M22.224 25.0 h6.5520000000000005 l0.78 9.36 h-8.112 z" fill="#d8a78b" /><rect x="22.692" y="28.119999999999997" width="5.6160000000000005" height="2.8080000000000003" fill="#1f2024" /><path d="M21.99 33.58 h7.0200000000000005 l1.17 7.800000000000001 q-4.68 2.34 -9.36 0z" fill="#23252b" /><ellipse cx="43" cy="17.5" rx="3.4" ry="3.6" fill="#5a4030" /><ellipse cx="43.4" cy="19.5" rx="2.2" ry="2.6" fill="#d9ad92" /><path d="M37 24 q2 -2 5 -2 h4 v18 h-8z" fill="#f2f2f2" /><path d="M37.5 25 L36 31 L40 30" fill="none" stroke="#d9ad92" stroke-width="1.8" stroke-linecap="round" stroke-linejoin="round" /><rect x="39" y="38" width="8" height="5" fill="#1d1d20" /><ellipse cx="42" cy="44" rx="3.5" ry="2" fill="#d0a080" /><path d="M44 20 q1 -7 9 -7 h8 q8 0 9 7 l2 16 q0 2 -3 2 l-1 -6 -1 14 h-18 l-1 -14 -2 8 q-3 0 -3 -3z" fill="#5c5e63" /><ellipse cx="57" cy="13" rx="5.5" ry="2.5" fill="#2a2523" /><path d="M45.5 45 q0 -3 4 -3 h14 q5 0 5 5 v6 q-1 3 -5 3 h-14 q-4 -1 -4 -4z" fill="#222834" /><ellipse cx="55" cy="56.5" rx="7" ry="2.4" fill="#b98468" /></g></g></svg></span></div><div class="td c-ti"><span style="letter-spacing:0.345px;margin-left:0.00px">Power Yoga Bootcamp - Strength &amp; Conditioning</span></div><div class="td c-le"><span style="letter-spacing:0.705px;margin-left:0.00px">Intermediate</span></div><div class="td c-ca"><span style="letter-spacing:0.189px;margin-left:0.00px">Restorative Yoga</span></div><div class="td c-st"><span class="badge bg-success">Active</span></div><div class="td c-ap"><span class="badge bg-success">Approved</span></div><div class="td c-cr"><span style="letter-spacing:0.912px;margin-left:0.00px">Admin</span></div><div class="td c-ac"><span class="abtn bg-warning"><svg class="ti" width="14" height="14" viewBox="0 0 24 24" fill="none" stroke="#fff" stroke-width="2" stroke-linecap="round" stroke-linejoin="round" ><path d="M12 12m-2 0a2 2 0 1 0 4 0a2 2 0 1 0 -4 0"/><path d="M22 12c-2.667 4.667 -6 7 -10 7s-7.333 -2.333 -10 -7c2.667 -4.667 6 -7 10 -7s7.333 2.333 10 7"/></svg></span><span class="abtn bg-info"><svg class="ti" width="14" height="14" viewBox="0 0 24 24" fill="none" stroke="#fff" stroke-width="2" stroke-linecap="round" stroke-linejoin="round" ><path d="M4 20h4l10.5 -10.5a1.5 1.5 0 0 0 -4 -4l-10.5 10.5v4"/><path d="M13.5 6.5l4 4"/></svg></span><span class="abtn bg-danger"><svg class="ti" width="14" height="14" viewBox="0 0 24 24" fill="none" stroke="#fff" stroke-width="2" stroke-linecap="round" stroke-linejoin="round" ><path d="M4 7l16 0"/><path d="M10 11l0 6"/><path d="M14 11l0 6"/><path d="M5 7l1 12a2 2 0 0 0 2 2h8a2 2 0 0 0 2 -2l1 -12"/><path d="M9 7v-3a1 1 0 0 1 1 -1h4a1 1 0 0 1 1 1v3"/></svg></span></div></div>
<div class="tr" style="top:360.99px"><i class="ln"></i><div class="td c-no">4</div><div class="td c-th"><span class="thumb"><svg width="76" height="76" viewBox="0 0 76 76"><defs><clipPath id="c4"><rect x="0" y="14" width="76" height="48"/></clipPath><filter id="f4" x="-5%" y="-5%" width="110%" height="110%"><feGaussianBlur stdDeviation="0.55"/></filter></defs><g clip-path="url(#c4)"><g filter="url(#f4)"><rect x="-2" y="12" width="80" height="28" fill="#eef0ee" /><rect x="-2" y="14" width="11" height="24" fill="#d9dde0" /><rect x="60" y="14" width="9" height="24" fill="#d5d8dc" /><rect x="10" y="14" width="13" height="22" fill="#cfe3c7" /><rect x="12" y="16" width="9" height="8" fill="#eaf3e6" /><rect x="33" y="14" width="28" height="22" fill="#cfe6c4" /><rect x="36" y="16" width="10" height="12" fill="#e9f5e3" /><rect x="48" y="20" width="11" height="12" fill="#dbefd0" /><rect x="70" y="14" width="8" height="22" fill="#cfe2c3" /><rect x="27" y="14" width="5" height="24" fill="#e1e4e7" /><rect x="46.3" y="14" width="1" height="22" fill="#f4f4f4" /><rect x="33" y="25.5" width="28" height="0.9" fill="#f4f4f4" /><rect x="16" y="14" width="0.9" height="22" fill="#f4f4f4" /><rect x="-2" y="37" width="80" height="27" fill="#b08c72" /><rect x="-2" y="37" width="80" height="4" fill="#c9ad96" /><rect x="-2" y="56" width="80" height="8" fill="#9b7862" /><ellipse cx="58" cy="58" rx="18" ry="4" fill="#c0a08a" /><path d="M0 49 l22 -3 6 2 -22 4 -6 -1z" fill="#3f5560" /><path d="M22 54 l26 -4 8 2 -24 5z" fill="#3c4f5b" /><path d="M52 46 l16 -3 6 1.5 -15 3.5z" fill="#3f545d" /><path d="M46 41 l10 -1 3 1 -10 1.5z" fill="#475a64" /><ellipse cx="12.5" cy="30" rx="2.3" ry="3.2" fill="#7a5038" /><ellipse cx="13.2" cy="31" rx="1.7" ry="2.2" fill="#ddb097" /><path d="M10 34 q3 -1.5 6 0 l5 7 3 4 q1 3 -3 3.5 h-11 q-2 -1 -1 -4z" fill="#8b9374" /><ellipse cx="20" cy="48.8" rx="3" ry="1" fill="#d9a98d" /><ellipse cx="26" cy="24.5" rx="1.8" ry="2.6" fill="#5b3d2e" /><rect x="24.3" y="28" width="4" height="5" fill="#a9c3dc" /><path d="M22.5 33 h8 l3 4 h-12z" fill="#6d7f8c" /><ellipse cx="27" cy="31" rx="3.4" ry="2.2" fill="#dab19b" /><ellipse cx="41" cy="23.5" rx="2" ry="2.8" fill="#8a5a3c" /><rect x="40" y="27" width="5" height="7" fill="#e7edf2" /><path d="M40 34 h8 l6 5 -4 2 h-10z" fill="#e5c4b4" /><path d="M35 26 q3 -3 5 0 l1.5 10 -3 3 -4 -4z" fill="#8a4f33" /><ellipse cx="38.6" cy="28.5" rx="1.9" ry="2.4" fill="#e0b198" /><path d="M32.5 32.5 q4 -2 8 0 l1 9 h-8.5z" fill="#446392" /><path d="M33.5 35 L37.5 44 L38 50" fill="none" stroke="#d9a88c" stroke-width="1.7" stroke-linecap="round" stroke-linejoin="round" /><path d="M40.5 35 L47 41" fill="none" stroke="#d9a88c" stroke-width="1.7" stroke-linecap="round" stroke-linejoin="round" /><path d="M32 42 h9 l6 3 q2 3 -2 4.5 l-12 3 q-3 0 -2.5 -4z" fill="#1f2428" /><ellipse cx="45" cy="52" rx="3.2" ry="1.3" fill="#e1b39a" /><ellipse cx="50" cy="46.5" rx="2.2" ry="1.2" fill="#e1b39a" /><path d="M60 26 q3 -3 4.5 0 l-.5 9 -4.5 2z" fill="#4a3229" /><ellipse cx="64" cy="27.3" rx="1.8" ry="2.4" fill="#e0b39c" /><path d="M60.5 31 q3 -1 5 0 l2 8 h-7z" fill="#f2d6cf" /><path d="M58.5 39 h9 l4 3 q1 3 -2 3.5 h-10 q-3 0 -2 -3.5z" fill="#ebbfb5" /><path d="M66 33 L71 38" fill="none" stroke="#e0b39c" stroke-width="1.4" stroke-linecap="round" stroke-linejoin="round" /></g></g></svg></span></div><div class="td c-ti"><span style="letter-spacing:0.174px;margin-left:0.00px">Prenatal Yoga Journey - Safe Practice for Expecting Mothers</span></div><div class="td c-le"><span style="letter-spacing:0.446px;margin-left:0.00px">Expert</span></div><div class="td c-ca"><span style="letter-spacing:0.122px;margin-left:0.00px">Ashtanga Yoga</span></div><div class="td c-st"><span class="badge bg-danger">Inactive</span></div><div class="td c-ap"><span class="badge bg-warning">Pending</span></div><div class="td c-cr"><span style="letter-spacing:0.656px;margin-left:0.00px">Instructor</span></div><div class="td c-ac"><span class="abtn bg-warning"><svg class="ti" width="14" height="14" viewBox="0 0 24 24" fill="none" stroke="#fff" stroke-width="2" stroke-linecap="round" stroke-linejoin="round" ><path d="M12 12m-2 0a2 2 0 1 0 4 0a2 2 0 1 0 -4 0"/><path d="M22 12c-2.667 4.667 -6 7 -10 7s-7.333 -2.333 -10 -7c2.667 -4.667 6 -7 10 -7s7.333 2.333 10 7"/></svg></span><span class="abtn bg-info"><svg class="ti" width="14" height="14" viewBox="0 0 24 24" fill="none" stroke="#fff" stroke-width="2" stroke-linecap="round" stroke-linejoin="round" ><path d="M4 20h4l10.5 -10.5a1.5 1.5 0 0 0 -4 -4l-10.5 10.5v4"/><path d="M13.5 6.5l4 4"/></svg></span><span class="abtn bg-danger"><svg class="ti" width="14" height="14" viewBox="0 0 24 24" fill="none" stroke="#fff" stroke-width="2" stroke-linecap="round" stroke-linejoin="round" ><path d="M4 7l16 0"/><path d="M10 11l0 6"/><path d="M14 11l0 6"/><path d="M5 7l1 12a2 2 0 0 0 2 2h8a2 2 0 0 0 2 -2l1 -12"/><path d="M9 7v-3a1 1 0 0 1 1 -1h4a1 1 0 0 1 1 1v3"/></svg></span></div></div>
<div class="tr" style="top:465.32px"><i class="ln"></i><div class="td c-no">5</div><div class="td c-th"><span class="thumb"><svg width="76" height="76" viewBox="0 0 76 76"><defs><clipPath id="c5"><rect x="0" y="11" width="76" height="55"/></clipPath><filter id="f5" x="-5%" y="-5%" width="110%" height="110%"><feGaussianBlur stdDeviation="0.45"/></filter><linearGradient id="g5a" x1="0" x2="1" y1="0" y2="0"><stop offset="0" stop-color="#cbc9c4"/><stop offset=".35" stop-color="#dddcd8"/><stop offset=".7" stop-color="#d6d4d0"/><stop offset="1" stop-color="#b4b0ab"/></linearGradient><linearGradient id="g5b" x1="0" x2="0" y1="0" y2="1"><stop offset="0" stop-color="#8f8a84" stop-opacity=".45"/><stop offset=".25" stop-color="#8f8a84" stop-opacity="0"/></linearGradient><linearGradient id="g5c" x1="0" x2="1" y1="0" y2="0"><stop offset="0" stop-color="#7f7169"/><stop offset=".5" stop-color="#95877e"/><stop offset="1" stop-color="#85766d"/></linearGradient></defs><g clip-path="url(#c5)"><g filter="url(#f5)"><rect x="-2" y="9" width="80" height="48" fill="url(#g5a)" /><rect x="-2" y="9" width="80" height="48" fill="url(#g5b)" /><rect x="-2" y="53.3" width="80" height="1.5" fill="#e3e2de" /><rect x="-2" y="54.8" width="80" height="13" fill="url(#g5c)" /><rect x="24" y="57.2" width="46" height="1.2" fill="#5f9cc0" /><ellipse cx="46.5" cy="25.3" rx="2.2" ry="1.7" fill="#2a2422" /><ellipse cx="45.6" cy="28" rx="1.9" ry="2.3" fill="#c99778" /><rect x="45" y="30" width="1.6" height="2" fill="#c28f70" /><path d="M27.5 32.4 L41 32.6" fill="none" stroke="#c28e6e" stroke-width="1.5" stroke-linecap="round" stroke-linejoin="round" /><path d="M50 32.6 L63 33.4" fill="none" stroke="#c28e6e" stroke-width="1.5" stroke-linecap="round" stroke-linejoin="round" /><path d="M42.3 32 h6.6 l-.8 8 h-5z" fill="#8a8d90" /><rect x="43" y="39.8" width="5" height="1" fill="#c28e6e" /><path d="M45 42 L36 45.5 L36 53.5" fill="none" stroke="#17181b" stroke-width="3.2" stroke-linecap="round" stroke-linejoin="round" /><path d="M47.5 42 L58 54.5" fill="none" stroke="#17181b" stroke-width="3" stroke-linecap="round" stroke-linejoin="round" /><ellipse cx="35" cy="55.6" rx="2.2" ry="0.9" fill="#c28e6e" /><ellipse cx="59.5" cy="55.6" rx="2.2" ry="0.9" fill="#c28e6e" /></g></g></svg></span></div><div class="td c-ti"><span style="letter-spacing:0.221px;margin-left:0.00px">Yin Yoga &amp; Mindfulness Journey</span></div><div class="td c-le"><span style="letter-spacing:0.460px;margin-left:0.00px">Beginner</span></div><div class="td c-ca"><span style="letter-spacing:0.189px;margin-left:0.00px">Restorative Yoga</span></div><div class="td c-st"><span class="badge bg-success">Active</span></div><div class="td c-ap"><span class="badge bg-success">Approved</span></div><div class="td c-cr"><span style="letter-spacing:0.912px;margin-left:0.00px">Admin</span></div><div class="td c-ac"><span class="abtn bg-warning"><svg class="ti" width="14" height="14" viewBox="0 0 24 24" fill="none" stroke="#fff" stroke-width="2" stroke-linecap="round" stroke-linejoin="round" ><path d="M12 12m-2 0a2 2 0 1 0 4 0a2 2 0 1 0 -4 0"/><path d="M22 12c-2.667 4.667 -6 7 -10 7s-7.333 -2.333 -10 -7c2.667 -4.667 6 -7 10 -7s7.333 2.333 10 7"/></svg></span><span class="abtn bg-info"><svg class="ti" width="14" height="14" viewBox="0 0 24 24" fill="none" stroke="#fff" stroke-width="2" stroke-linecap="round" stroke-linejoin="round" ><path d="M4 20h4l10.5 -10.5a1.5 1.5 0 0 0 -4 -4l-10.5 10.5v4"/><path d="M13.5 6.5l4 4"/></svg></span><span class="abtn bg-danger"><svg class="ti" width="14" height="14" viewBox="0 0 24 24" fill="none" stroke="#fff" stroke-width="2" stroke-linecap="round" stroke-linejoin="round" ><path d="M4 7l16 0"/><path d="M10 11l0 6"/><path d="M14 11l0 6"/><path d="M5 7l1 12a2 2 0 0 0 2 2h8a2 2 0 0 0 2 -2l1 -12"/><path d="M9 7v-3a1 1 0 0 1 1 -1h4a1 1 0 0 1 1 1v3"/></svg></span></div></div>
<div class="tr" style="top:569.65px"><i class="ln"></i><div class="td c-no">6</div><div class="td c-th"><span class="thumb"><svg width="76" height="76" viewBox="0 0 76 76"><defs><clipPath id="c6"><rect x="0" y="10" width="76" height="55"/></clipPath><filter id="f6" x="-5%" y="-5%" width="110%" height="110%"><feGaussianBlur stdDeviation="0.6"/></filter><radialGradient id="g6a" cx=".52" cy=".12" r=".5"><stop offset="0" stop-color="#a9ad72"/><stop offset=".45" stop-color="#5f7d55"/><stop offset="1" stop-color="#30483a"/></radialGradient><linearGradient id="g6b" x1="0" x2="0" y1="0" y2="1"><stop offset="0" stop-color="#7d5c48"/><stop offset=".3" stop-color="#a98570"/><stop offset="1" stop-color="#98705a"/></linearGradient></defs><g clip-path="url(#c6)"><g filter="url(#f6)"><rect x="-2" y="8" width="80" height="44" fill="url(#g6a)" /><ellipse cx="8" cy="26" rx="14" ry="13" fill="#2c4638"  opacity=".85"/><ellipse cx="72" cy="24" rx="9" ry="14" fill="#2b4337"  opacity=".8"/><ellipse cx="26" cy="35" rx="12" ry="7" fill="#3a5544" /><ellipse cx="58" cy="42" rx="14" ry="9" fill="#4d6e50" /><rect x="-2" y="10" width="80" height="1.2" fill="#1d2b22" /><ellipse cx="33" cy="27" rx="3.5" ry="5" fill="#8c9b55"  opacity=".8"/><ellipse cx="50" cy="22" rx="2.5" ry="2" fill="#b5b15e"  opacity=".8"/><rect x="-2" y="41" width="80" height="8" fill="#39554c" /><ellipse cx="30" cy="41.5" rx="14" ry="3" fill="#93a096" /><ellipse cx="29" cy="40.5" rx="5" ry="2.4" fill="#4b4943" /><path d="M0 39 l3 -7 2 6 4 -6 1 7 5 -5 -3 9 h-12z" fill="#6f9a40" /><rect x="-2" y="47" width="80" height="19" fill="url(#g6b)" /><rect x="-2" y="46.5" width="80" height="1.8" fill="#8e7b6a" /><ellipse cx="32" cy="60.5" rx="17" ry="2" fill="#caa68e" /><ellipse cx="14" cy="57" rx="9" ry="1.3" fill="#86614d" /><rect x="-2" y="63.5" width="80" height="3" fill="#8a634c" /><ellipse cx="63" cy="20" rx="5" ry="5.5" fill="#6a4a3a" /><ellipse cx="69" cy="23" rx="2.6" ry="3" fill="#5e4032" /><ellipse cx="60.5" cy="21.5" rx="3.2" ry="4.4" fill="#d2a084" /><rect x="60.5" y="25" width="3.4" height="4" fill="#c79479" /><path d="M56 33 q3 -5 8 -5 q5 0 6 5 l1 12 h-13z" fill="#c9987d" /><path d="M56.5 34 q5 -4 11 -2 l1 10 q-6 2 -11 0z" fill="#8f8c92" /><path d="M56.5 35 L52 44.5 L41.5 48" fill="none" stroke="#c9987d" stroke-width="2.4" stroke-linecap="round" stroke-linejoin="round" /><path d="M69.5 34 L71 45 L64 47" fill="none" stroke="#b98468" stroke-width="2.4" stroke-linecap="round" stroke-linejoin="round" /><ellipse cx="40.5" cy="48" rx="2.2" ry="1.6" fill="#d2a084" /><path d="M42 51 q2 -4 10 -3 l12 2 q8 -4 11 0 q3 6 -3 9 h-24 q-7 -2 -6 -8z" fill="#8d888c" /><ellipse cx="54" cy="58.5" rx="4" ry="1.3" fill="#c9987d" /><ellipse cx="62" cy="60.5" rx="12" ry="1.4" fill="#3a2a22"  opacity=".6"/></g></g></svg></span></div><div class="td c-ti"><span style="letter-spacing:0.164px;margin-left:0.00px">Advanced Vinyasa Flow Mastery</span></div><div class="td c-le"><span style="letter-spacing:0.446px;margin-left:0.00px">Expert</span></div><div class="td c-ca"><span style="letter-spacing:0.190px;margin-left:0.00px">Power Yoga</span></div><div class="td c-st"><span class="badge bg-success">Active</span></div><div class="td c-ap"><span class="badge bg-success">Approved</span></div><div class="td c-cr"><span style="letter-spacing:0.912px;margin-left:0.00px">Admin</span></div><div class="td c-ac"><span class="abtn bg-warning"><svg class="ti" width="14" height="14" viewBox="0 0 24 24" fill="none" stroke="#fff" stroke-width="2" stroke-linecap="round" stroke-linejoin="round" ><path d="M12 12m-2 0a2 2 0 1 0 4 0a2 2 0 1 0 -4 0"/><path d="M22 12c-2.667 4.667 -6 7 -10 7s-7.333 -2.333 -10 -7c2.667 -4.667 6 -7 10 -7s7.333 2.333 10 7"/></svg></span><span class="abtn bg-info"><svg class="ti" width="14" height="14" viewBox="0 0 24 24" fill="none" stroke="#fff" stroke-width="2" stroke-linecap="round" stroke-linejoin="round" ><path d="M4 20h4l10.5 -10.5a1.5 1.5 0 0 0 -4 -4l-10.5 10.5v4"/><path d="M13.5 6.5l4 4"/></svg></span><span class="abtn bg-danger"><svg class="ti" width="14" height="14" viewBox="0 0 24 24" fill="none" stroke="#fff" stroke-width="2" stroke-linecap="round" stroke-linejoin="round" ><path d="M4 7l16 0"/><path d="M10 11l0 6"/><path d="M14 11l0 6"/><path d="M5 7l1 12a2 2 0 0 0 2 2h8a2 2 0 0 0 2 -2l1 -12"/><path d="M9 7v-3a1 1 0 0 1 1 -1h4a1 1 0 0 1 1 1v3"/></svg></span></div></div>
<div class="tr" style="top:673.98px"><i class="ln"></i><div class="td c-no">7</div><div class="td c-th"><span class="thumb"><svg width="76" height="76" viewBox="0 0 76 76"><defs><clipPath id="c7"><rect x="0" y="11" width="76" height="55"/></clipPath><filter id="f7" x="-5%" y="-5%" width="110%" height="110%"><feGaussianBlur stdDeviation="0.55"/></filter></defs><g clip-path="url(#c7)"><g filter="url(#f7)"><rect x="-2" y="9" width="80" height="34" fill="#6a6c6f" /><rect x="40" y="11" width="38" height="30" fill="#626467" /><rect x="-2" y="9" width="19" height="32.5" fill="#d9b891" /><rect x="-2" y="18" width="19" height="1" fill="#c9a47c" /><rect x="-2" y="26" width="19" height="1" fill="#c9a47c" /><rect x="-2" y="33" width="19" height="1" fill="#c9a47c" /><rect x="-2" y="41.5" width="80" height="26" fill="#c6c9cd" /><path d="M8 47 L60 43 L78 50 V62 H0 V58z" fill="#34363b" /><rect x="-2" y="61.5" width="80" height="6" fill="#c3c8cf" /><path d="M0 46 l10 -2 v12 l-10 6z" fill="#d4d6d9" /><ellipse cx="19" cy="24.55" rx="2.3100000000000005" ry="2.75" fill="#c97f55" /><ellipse cx="19" cy="25.1" rx="1.6500000000000001" ry="2.09" fill="#e3b9a2" /><path d="M15.7 28.95 q3.3000000000000003 -1.6500000000000001 6.6000000000000005 0 l0.55 8.8 h-7.700000000000001 z" fill="#dfb39b" /><path d="M16.8 30.05 h4.4 l0.275 6.050000000000001 h-4.95 z" fill="#a9c4e3" /><path d="M15.975 30.05 L12.95 38.85" fill="none" stroke="#dfb39b" stroke-width="1.1" stroke-linecap="round" stroke-linejoin="round" /><ellipse cx="18.45" cy="39.95" rx="4.95" ry="1.6500000000000001" fill="#26282d" /><ellipse cx="26" cy="22.62" rx="2.604" ry="3.1" fill="#b98760" /><ellipse cx="26" cy="23.24" rx="1.8599999999999999" ry="2.356" fill="#e3b9a2" /><path d="M22.28 27.58 q3.7199999999999998 -1.8599999999999999 7.4399999999999995 0 l0.62 9.92 h-8.68 z" fill="#dfb39b" /><path d="M23.52 28.82 h4.96 l0.31 6.82 h-5.58 z" fill="#6fb05a" /><path d="M22.59 28.82 L19.18 38.739999999999995" fill="none" stroke="#dfb39b" stroke-width="1.24" stroke-linecap="round" stroke-linejoin="round" /><ellipse cx="25.38" cy="39.980000000000004" rx="5.58" ry="1.8599999999999999" fill="#26282d" /><ellipse cx="32" cy="22.2" rx="2.94" ry="3.5" fill="#a8855f" /><ellipse cx="32" cy="22.9" rx="2.0999999999999996" ry="2.6599999999999997" fill="#e3b9a2" /><path d="M27.8 27.8 q4.199999999999999 -2.0999999999999996 8.399999999999999 0 l0.7 11.2 h-9.799999999999999 z" fill="#dfb39b" /><path d="M29.2 29.2 h5.6 l0.35 7.699999999999999 h-6.3 z" fill="#3a3d44" /><path d="M28.15 29.2 L24.3 40.4" fill="none" stroke="#dfb39b" stroke-width="1.4" stroke-linecap="round" stroke-linejoin="round" /><ellipse cx="31.3" cy="41.8" rx="6.3" ry="2.0999999999999996" fill="#26282d" /><ellipse cx="38" cy="21.35" rx="3.57" ry="4.25" fill="#6b4a38" /><ellipse cx="38" cy="22.2" rx="2.55" ry="3.23" fill="#e3b9a2" /><path d="M32.9 28.15 q5.1 -2.55 10.2 0 l0.85 13.6 h-11.9 z" fill="#dfb39b" /><path d="M34.6 29.85 h6.8 l0.425 9.35 h-7.6499999999999995 z" fill="#4a4d55" /><path d="M33.325 29.85 L28.65 43.45" fill="none" stroke="#dfb39b" stroke-width="1.7" stroke-linecap="round" stroke-linejoin="round" /><ellipse cx="37.15" cy="45.15" rx="7.6499999999999995" ry="2.55" fill="#26282d" /><path d="M44.5 22 q5 -9 10.5 0 l1.5 12 h-13.5z" fill="#d9bd8a" /><ellipse cx="50" cy="23.5" rx="3.6" ry="4.6" fill="#e9c3ad" /><rect x="48.3" y="27.5" width="3.6" height="4" fill="#e2b9a2" /><path d="M41 33 q9 -4 18 0 l1 5 -2 8 h-14 l-3 -8z" fill="#e4b9a1" /><path d="M44.5 31.5 h2.5 q3 5 6 0 h2.5 l1 14 h-12.5z" fill="#1d2a42" /><rect x="45" y="46" width="11.5" height="6" fill="#5d6068" /><path d="M42.5 35 L37 47 L31 51" fill="none" stroke="#e2b7a0" stroke-width="2.6" stroke-linecap="round" stroke-linejoin="round" /><path d="M58 35 L63.5 48.5 L69 51" fill="none" stroke="#e2b7a0" stroke-width="2.6" stroke-linecap="round" stroke-linejoin="round" /><ellipse cx="30.5" cy="51.5" rx="2.6" ry="2.2" fill="#e6b8a2" /><ellipse cx="70" cy="52" rx="3" ry="2.4" fill="#e6b8a2" /><path d="M33 54 q1 -5 9 -4 l14 1 q8 -3 12 1 q3 5 -2 6 h-28 q-6 0 -5 -4z" fill="#4f525b" /><path d="M42 51 l10 3 -6 4 h-8z" fill="#dcae96" /><ellipse cx="39" cy="55.5" rx="6" ry="3" fill="#2c2e35" /></g></g></svg></span></div><div class="td c-ti"><span style="letter-spacing:0.176px;margin-left:0.00px">Vinyasa Flow Mastery</span></div><div class="td c-le"><span style="letter-spacing:0.705px;margin-left:0.00px">Intermediate</span></div><div class="td c-ca"><span style="letter-spacing:0.032px;margin-left:0.00px">Vinyasa Flow</span></div><div class="td c-st"><span class="badge bg-success">Active</span></div><div class="td c-ap"><span class="badge bg-success">Approved</span></div><div class="td c-cr"><span style="letter-spacing:0.912px;margin-left:0.00px">Admin</span></div><div class="td c-ac"><span class="abtn bg-warning"><svg class="ti" width="14" height="14" viewBox="0 0 24 24" fill="none" stroke="#fff" stroke-width="2" stroke-linecap="round" stroke-linejoin="round" ><path d="M12 12m-2 0a2 2 0 1 0 4 0a2 2 0 1 0 -4 0"/><path d="M22 12c-2.667 4.667 -6 7 -10 7s-7.333 -2.333 -10 -7c2.667 -4.667 6 -7 10 -7s7.333 2.333 10 7"/></svg></span><span class="abtn bg-info"><svg class="ti" width="14" height="14" viewBox="0 0 24 24" fill="none" stroke="#fff" stroke-width="2" stroke-linecap="round" stroke-linejoin="round" ><path d="M4 20h4l10.5 -10.5a1.5 1.5 0 0 0 -4 -4l-10.5 10.5v4"/><path d="M13.5 6.5l4 4"/></svg></span><span class="abtn bg-danger"><svg class="ti" width="14" height="14" viewBox="0 0 24 24" fill="none" stroke="#fff" stroke-width="2" stroke-linecap="round" stroke-linejoin="round" ><path d="M4 7l16 0"/><path d="M10 11l0 6"/><path d="M14 11l0 6"/><path d="M5 7l1 12a2 2 0 0 0 2 2h8a2 2 0 0 0 2 -2l1 -12"/><path d="M9 7v-3a1 1 0 0 1 1 -1h4a1 1 0 0 1 1 1v3"/></svg></span></div></div>
<div class="tr" style="top:778.31px"><div class="td c-th"><span class="thumb"><svg width="76" height="76" viewBox="0 0 76 76"><defs><clipPath id="c8"><rect x="0" y="11" width="76" height="55"/></clipPath><filter id="f8" x="-5%" y="-5%" width="110%" height="110%"><feGaussianBlur stdDeviation="0.55"/></filter></defs><g clip-path="url(#c8)"><g filter="url(#f8)"><rect x="-2" y="9" width="80" height="57" fill="#e3ebdc" /><rect x="-2" y="9" width="7" height="57" fill="#f3e6c3" /><ellipse cx="8.5" cy="17.5" rx="5.5" ry="6.5" fill="#6b2e20" /><ellipse cx="24" cy="14" rx="5" ry="3" fill="#a9c596" /><ellipse cx="33" cy="17" rx="4" ry="3" fill="#9dbb8b" /><ellipse cx="50" cy="14" rx="6" ry="3" fill="#a3c191" /><ellipse cx="58" cy="18" rx="4" ry="2.5" fill="#b5cfa6" /><rect x="39.3" y="9" width="1.6" height="57" fill="#50555a" /><rect x="64.5" y="9" width="14" height="57" fill="#4a5054" /><rect x="62" y="9" width="2.5" height="57" fill="#cfd6d0" /></g></g></svg></span></div></div>
</div></section>
<div class="topstrip"></div><div class="scrolltrack"></div><div class="scrollthumb"></div>
</div></body></html>
